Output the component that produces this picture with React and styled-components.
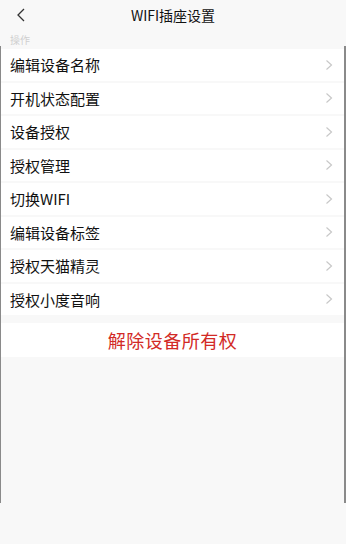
import React from "react";
import styled, { createGlobalStyle } from "styled-components";

const GlobalStyle = createGlobalStyle`
  html, body {
    margin: 0;
    padding: 0;
    background: #f8f8f8;
  }
  body {
    font-family: "Noto Sans CJK SC", "Noto Sans", "Liberation Sans", sans-serif;
  }
`;

const Page = styled.div`
  position: relative;
  width: 346px;
  height: 544px;
  background: #f8f8f8;
  overflow: hidden;
`;

const Header = styled.div`
  position: relative;
  height: 30px;
  display: flex;
  align-items: center;
  justify-content: center;
  background: #f8f8f8;
`;

const BackButton = styled.button`
  position: absolute;
  left: 13px;
  top: 7px;
  width: 16px;
  height: 16px;
  padding: 0;
  border: none;
  background: none;
  display: flex;
  align-items: center;
  justify-content: center;
`;

const Title = styled.div`
  font-size: 14px;
  color: #111;
  line-height: 1;
`;

const SectionLabel = styled.div`
  height: 19px;
  padding-left: 10px;
  font-size: 10px;
  color: #cfcfcf;
  display: flex;
  align-items: center;
`;

const List = styled.div`
  margin: 0 2px 0 1px;
  display: flex;
  flex-direction: column;
  gap: 2px;
`;

const Row = styled.div`
  height: 31.5px;
  background: #fff;
  display: flex;
  align-items: center;
  justify-content: space-between;
  padding: 0 11px 0 9px;
`;

const RowText = styled.span`
  font-size: 15px;
  color: #111;
`;

const Danger = styled.div`
  margin: 8px 2px 0 1px;
  height: 34px;
  background: #fff;
  display: flex;
  align-items: center;
  justify-content: center;
  font-size: 18px;
  color: #d22a26;
  letter-spacing: 0.5px;
`;

const Edge = styled.div`
  position: absolute;
  top: 46px;
  height: 457px;
  ${(p) => (p.$side === "left" ? "left: 0; width: 1px;" : "right: 0; width: 2px;")}
  background: #8a8a8a;
`;

const Chevron = () => (
  <svg width="8" height="12" viewBox="0 0 8 12">
    <path d="M1.5 1.5 L6.5 6 L1.5 10.5" fill="none" stroke="#c8c8c8" strokeWidth="1.2" />
  </svg>
);

const items = [
  "编辑设备名称",
  "开机状态配置",
  "设备授权",
  "授权管理",
  "切换WIFI",
  "编辑设备标签",
  "授权天猫精灵",
  "授权小度音响",
];

export default function App() {
  return (
    <Page>
      <GlobalStyle />
      <Header>
        <BackButton>
          <svg width="10" height="14" viewBox="0 0 10 14">
            <path d="M8 1 L2 7 L8 13" fill="none" stroke="#333" strokeWidth="1.3" />
          </svg>
        </BackButton>
        <Title>WIFI插座设置</Title>
      </Header>
      <SectionLabel>操作</SectionLabel>
      <List>
        {items.map((t) => (
          <Row key={t}>
            <RowText>{t}</RowText>
            <Chevron />
          </Row>
        ))}
      </List>
      <Danger>解除设备所有权</Danger>
      <Edge $side="left" />
      <Edge $side="right" />
    </Page>
  );
}
